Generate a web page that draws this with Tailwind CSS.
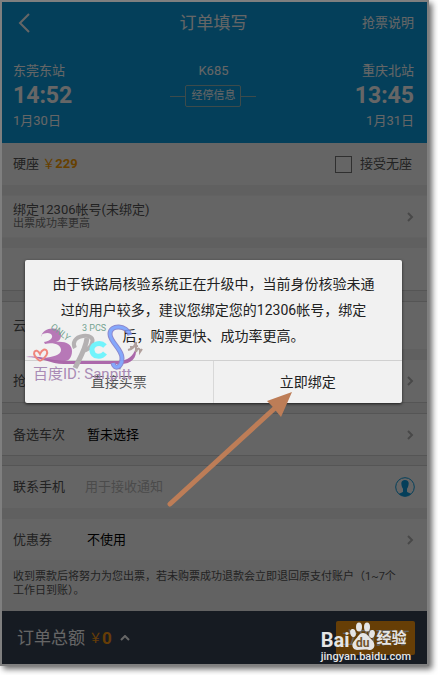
<!DOCTYPE html>
<html lang="zh-CN">
<head>
    <meta charset="UTF-8">
    <meta name="viewport" content="width=device-width, initial-scale=1.0">
    <title>订单填写</title>
    <script src="https://cdn.jsdelivr.net/npm/@tailwindcss/browser@4"></script>
    <style>
        body {
            font-family: Roboto, 'Noto Sans CJK SC', sans-serif;
        }
    </style>
</head>
<body class="bg-white pr-[9px] pb-[9px]">
    <div class="relative border-2 border-[#7f7f7f] bg-[#f1f1f1] text-[13px] leading-[18px] text-[#555] shadow-[3px_3px_6px_rgba(0,0,0,0.6)]">
        <header class="h-[141px] bg-[#0a9ee1] pr-[13px] pl-[11px] text-white">
            <div class="grid h-[42px] grid-cols-3 items-center">
                <button type="button" aria-label="返回" class="pl-[5px] text-left">
                    <svg class="h-[20px] w-[12px]" viewBox="0 0 12 20" fill="none" stroke="currentColor" stroke-width="2"><path d="M11 1L2 10l9 9"/></svg>
                </button>
                <h1 class="text-center text-[17px] leading-6">订单填写</h1>
                <a href="#" class="text-right">抢票说明</a>
            </div>
            <div class="grid grid-cols-3 pt-[18px]">
                <div>
                    <p>东莞东站</p>
                    <p class="text-[23px] leading-8 font-bold">14:52</p>
                    <p>1月30日</p>
                </div>
                <div class="flex flex-col items-center">
                    <p>K685</p>
                    <div class="flex items-center pt-[5px]">
                        <span class="h-px w-[15px] bg-[#9bb]"></span>
                        <button type="button" class="h-[22px] rounded-xs border border-[#9bb] px-[5px] text-[11px] leading-5">经停信息</button>
                        <span class="h-px w-[15px] bg-[#9bb]"></span>
                    </div>
                </div>
                <div class="text-right">
                    <p>重庆北站</p>
                    <p class="text-[23px] leading-8 font-bold">13:45</p>
                    <p>1月31日</p>
                </div>
            </div>
        </header>

        <main>
            <div class="mb-[10px] flex h-[42px] items-center justify-between bg-[#fdfdfd] pr-[15px] pl-[11px]">
                <p>硬座 <span class="text-[#ffa000]">￥<b>229</b></span></p>
                <label class="flex items-center gap-2"><input type="checkbox" class="h-[17px] w-[17px] appearance-none border border-[#777]">接受无座</label>
            </div>
            <button type="button" class="mb-[10px] flex h-[43px] w-full items-center justify-between border-y border-[#f5f5f5] bg-[#fdfdfd] pr-[13px] pl-[11px] text-left">
                <span class="block leading-[15px]">绑定12306帐号(未绑定)<span class="block text-[11px] leading-[14px] text-[#777]">出票成功率更高</span></span>
                <svg class="h-[10px] w-[7px]" viewBox="0 0 7 10" fill="none" stroke="#b5b5b5" stroke-width="2"><path d="M1 1l4 4-4 4"/></svg>
            </button>
            <div class="mb-[10px] h-[43px] border-b border-[#d4d4d4] bg-[#fdfdfd]"></div>
            <div class="mb-[11px] h-[48px] border-t border-[#d4d4d4] bg-[#fdfdfd] pt-[15px] pl-[11px]">云</div>
            <div class="mb-[10px] flex h-[43px] items-center justify-between border-b border-[#d4d4d4] bg-[#fdfdfd] pr-[13px] pl-[11px]">
                抢
                <svg class="h-[10px] w-[7px]" viewBox="0 0 7 10" fill="none" stroke="#b5b5b5" stroke-width="2"><path d="M1 1l4 4-4 4"/></svg>
            </div>
            <button type="button" class="mb-[9px] flex h-[43px] w-full items-center border-y border-[#d4d4d4] bg-[#fdfdfd] pr-[13px] pl-[11px] text-left">
                <span class="w-[74px]">备选车次</span>
                <span class="grow text-black">暂未选择</span>
                <svg class="h-[10px] w-[7px]" viewBox="0 0 7 10" fill="none" stroke="#b5b5b5" stroke-width="2"><path d="M1 1l4 4-4 4"/></svg>
            </button>
            <div class="mb-[11px] flex h-[43px] items-center border-t border-[#d4d4d4] bg-[#fdfdfd] pr-[12px] pl-[11px]">
                <label for="phone" class="w-[72px]">联系手机</label>
                <input id="phone" type="tel" placeholder="用于接收通知" class="min-w-0 grow placeholder:text-[#bbb]">
                <button type="button" aria-label="选择联系人">
                    <svg class="h-[20px] w-[20px]" viewBox="0 0 20 20"><circle cx="10" cy="10" r="9.3" fill="none" stroke="#0a9ee1" stroke-width="1"/><path d="M10 3c-2.8 0-4 1.700-3.600 4.200.2 2.200.9 3.600 1.600 4.500v3.100c-.5 1-2.600 1.200-4 1.900 3.300 3.700 8.700 3.700 12 0-1.400-.7-3.500-.9-4-1.900v-3.100c.7-.9 1.400-2.300 1.600-4.500C14 4.700 12.800 3 10 3z" fill="#0a9ee1"/></svg>
                </button>
            </div>
            <button type="button" class="flex h-[41px] w-full items-center bg-[#fdfdfd] pr-[13px] pl-[11px] text-left">
                <span class="w-[74px]">优惠券</span>
                <span class="grow text-black">不使用</span>
                <svg class="h-[10px] w-[7px]" viewBox="0 0 7 10" fill="none" stroke="#b5b5b5" stroke-width="2"><path d="M1 1l4 4-4 4"/></svg>
            </button>
            <p class="h-[51px] bg-[#f6f6f6] px-[11px] pt-[10px] text-[11px] leading-[14px]">收到票款后将努力为您出票，若未购票成功退款会立即退回原支付账户（1~7个<br>工作日到账）。</p>
        </main>

        <footer class="flex h-[53px] items-center justify-between bg-[#374456] pr-[12px] pl-[15px] text-white">
            <button type="button" class="flex items-center text-[17px] leading-6">
                订单总额
                <span class="ml-1 text-[13px] text-[#ff9a10]">￥</span><b class="text-[#ff9a10]">0</b>
                <svg class="ml-2 h-[6px] w-[10px]" viewBox="0 0 10 6" fill="none" stroke="currentColor" stroke-width="2"><path d="M1 5l4-4 4 4"/></svg>
            </button>
            <button type="button" class="h-[34px] w-[79px] rounded-xs bg-[#ff9c10] text-[17px]">立即预订</button>
        </footer>

        <div class="absolute inset-0 flex items-center bg-black/60 pr-[25px] pb-[3px] pl-[23px]">
            <div role="dialog" aria-modal="true" class="w-full rounded-xs bg-[#f1f1f1] text-sm text-[#222] shadow-[0_1px_3px_rgba(0,0,0,0.7)]">
                <p class="px-2 pt-[11px] pb-[11px] text-center leading-[26px] whitespace-nowrap">由于铁路局核验系统正在升级中，当前身份核验未通<br>过的用户较多，建议您绑定您的12306帐号，绑定<br>后，购票更快、成功率更高。</p>
                <div class="grid h-[43px] grid-cols-2 border-t border-[#d0d0d0]">
                    <button type="button" class="border-r border-[#d8d8d8] text-[#555]">直接买票</button>
                    <button type="button">立即绑定</button>
                </div>
            </div>
        </div>

        <!-- pointer to the bind button -->
        <svg class="pointer-events-none absolute top-[388px] left-[163px] h-[120px] w-[132px]" viewBox="165 390 132 120">
            <path d="M170 504L275 408" stroke="#bd7d57" stroke-width="5" stroke-linecap="round"/>
            <path d="M292 392l-25 9 5 5 4 5 5 6z" fill="#bd7d57"/>
        </svg>

        <!-- author mark -->
        <div class="pointer-events-none absolute top-[318px] left-[22px] w-[122px]">
            <svg class="h-[54px] w-[122px]" viewBox="24 320 122 54" fill="none" opacity=".85">
                <path d="M41 337c1-10 19-12 20-2 0 4-2 6-5 7 9-1 16 2 16 9 0 6-3 10-7 10-8 1-15 0-21-3 9-1 17-3 17-8 0-5-7-8-16-6l-1-2c7-1 10-5 7-8-3-2-7-1-10 1z" fill="#ad63ae"/>
                <path d="M26 357c13-2 24 3 36 4h56c10 0 15-5 18-13 1 10-4 16-16 16H64c-14 0-22-7-38-7z" fill="#a0529f"/>
                <path d="M40 361c-11-7-4-15 0-7 4-10 14-1 0 7" stroke="#ef7469" stroke-width="2"/>
                <path d="M75 348c-3-5 0-11 8-12 7-1 11 2 9 7-1 5-5 7-10 8" stroke="#aaa6a8" stroke-width="4"/>
                <path d="M87 338c-1 10-7 20-12 30" stroke="#aaa6a8" stroke-width="5"/>
                <path d="M105 346c-5-5-14-2-13 5 1 6 9 7 13 2" stroke="#5bf5ff" stroke-width="5"/>
                <path d="M130 335c-3-10-20-11-20-1 0 8 12 15 12 24 0 10-8 12-9 5" stroke="#7c78c8" stroke-width="5"/>
                <path d="M130 335c-3-10-20-11-20-1 0 8 12 15 12 24 0 10-8 12-9 5" stroke="#719cff" stroke-width="3"/>
                <path d="M128 350c5-1 6-3 8-8v10c2-5 4-4 4 0l2-3m-12-2l8-1" stroke="#a5928e" stroke-width="2"/>
                <g fill="#5d9580" font-family="Roboto" font-size="9">
                    <text transform="translate(50 328) rotate(38)">ONLY</text>
                    <text x="82" y="331">3 PCS</text>
                </g>
            </svg>
            <p class="-mt-[10px] pl-[9px] text-[15px] leading-5 whitespace-nowrap text-[#a98bb5]">百度ID: Sanpitt</p>
        </div>

        <!-- site mark -->
        <div class="pointer-events-none absolute right-[16px] bottom-0 text-[#e5e5e5]">
            <div class="flex h-[29px] items-end font-bold">
                <span class="text-[20px] leading-5">Bai</span>
                <svg class="-ml-px h-[28px] w-[26px]" viewBox="0 0 26 28" fill="#e5e5e5">
                    <ellipse cx="10" cy="5" rx="3" ry="4.500"/><ellipse cx="18" cy="5" rx="3" ry="4.500"/><ellipse cx="4" cy="11" rx="2.800" ry="4" transform="rotate(-12 4 11)"/><ellipse cx="23" cy="12" rx="2.800" ry="4" transform="rotate(12 23 12)"/>
                    <path d="M14 11c-4 0-5 4-8 7-5 5-2 10 2 10 4 0 8-1 12 0 6 0 7-6 3-10-3-3-5-7-9-7z"/>
                    <text x="7" y="25" font-family="Roboto" font-size="12" font-weight="bold" fill="#70552d">du</text>
                </svg>
                <span class="ml-[2px] text-[15px] leading-6">经验</span>
            </div>
            <p class="text-right text-[11px] leading-[14px] font-medium">jingyan.baidu.com</p>
        </div>
    </div>
</body>
</html>
